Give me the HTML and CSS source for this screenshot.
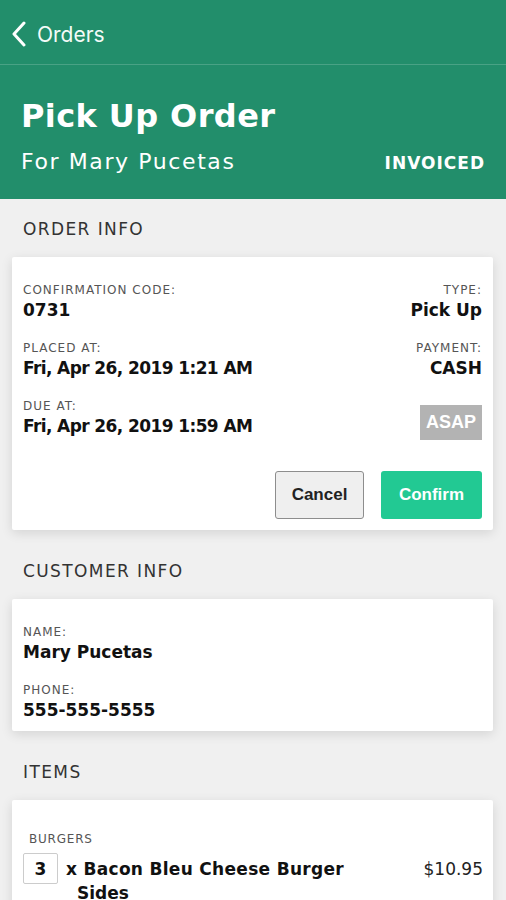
FILE: index.html
```html
<!DOCTYPE html>
<html>
<head>
<meta charset="utf-8">
<link rel="stylesheet" href="styles.css">
</head>
<body>
<header class="header">
  <div class="topbar">
    <svg class="chev" width="16" height="26" viewBox="0 0 16 26"><path d="M13 2 L3 13 L13 24" fill="none" stroke="#fff" stroke-width="3" stroke-linecap="round" stroke-linejoin="round"/></svg>
    <span class="back">Orders</span>
  </div>
  <div class="hero">
    <h1 class="title">Pick Up Order</h1>
    <div class="subrow">
      <span class="for">For Mary Pucetas</span>
      <span class="status">INVOICED</span>
    </div>
  </div>
</header>

<main class="content">
  <h2 class="section">ORDER INFO</h2>
  <section class="card order">
    <div class="grid">
      <div class="field"><div class="label">CONFIRMATION CODE:</div><div class="value">0731</div></div>
      <div class="field right"><div class="label">TYPE:</div><div class="value">Pick Up</div></div>
      <div class="field"><div class="label">PLACED AT:</div><div class="value date">Fri, Apr 26, 2019 1:21 AM</div></div>
      <div class="field right"><div class="label">PAYMENT:</div><div class="value">CASH</div></div>
      <div class="field"><div class="label">DUE AT:</div><div class="value date">Fri, Apr 26, 2019 1:59 AM</div></div>
      <div class="field right badgecell"><span class="badge">ASAP</span></div>
    </div>
    <div class="actions">
      <button class="btn cancel">Cancel</button>
      <button class="btn confirm">Confirm</button>
    </div>
  </section>

  <h2 class="section">CUSTOMER INFO</h2>
  <section class="card customer">
    <div class="field"><div class="label">NAME:</div><div class="value">Mary Pucetas</div></div>
    <div class="field"><div class="label">PHONE:</div><div class="value">555-555-5555</div></div>
  </section>

  <h2 class="section">ITEMS</h2>
  <section class="card items">
    <div class="cat">BURGERS</div>
    <div class="item">
      <span class="qty">3</span>
      <span class="name">x Bacon Bleu Cheese Burger</span>
      <span class="price">$10.95</span>
    </div>
    <div class="sub">Sides</div>
  </section>
</main>
</body>
</html>
```
FILE: styles.css
```css
* { box-sizing: border-box; }
body {
  margin: 0;
  background: #f0f0f0;
  font-family: "DejaVu Sans", "Open Sans", sans-serif;
  color: #111;
  overflow: hidden;
}
.header {
  background: #228e6b;
  color: #fff;
}
.topbar {
  height: 65px;
  display: flex;
  align-items: center;
  padding: 5px 0 0 11px;
  gap: 10px;
  border-bottom: 1px solid rgba(255,255,255,0.18);
}
.chev { display: block; margin-top: -2px; }
.back {
  font-family: "Inter", "Roboto", sans-serif;
  font-size: 21px;
  font-weight: 400;
  color: #f4fbf8;
}
.hero {
  padding: 29px 21px 0 21px;
  height: 134px;
}
.title {
  margin: 0;
  font-size: 32px;
  font-weight: 700;
  line-height: 44px;
  letter-spacing: 0.4px;
}
.subrow {
  display: flex;
  justify-content: space-between;
  align-items: baseline;
  margin-top: 9px;
}
.for { font-size: 22px; line-height: 30px; letter-spacing: 1.6px; }
.status { font-size: 17px; font-weight: 700; letter-spacing: 1px; margin-right: 0; }

.content { padding: 0 13px 0 12px; }
.section {
  margin: 0;
  padding: 18px 11px 0;
  height: 58px;
  font-size: 17px;
  font-weight: 400;
  color: #333;
  letter-spacing: 1.4px;
  line-height: 24px;
}
.card {
  background: #fff;
  border-radius: 2px;
  box-shadow: 0 3px 12px rgba(0,0,0,0.12);
  margin-bottom: 11px;
}
.order { padding: 26px 11px 11px; }
.grid {
  display: grid;
  grid-template-columns: 1fr auto;
  row-gap: 20px;
}
.field .label {
  font-size: 12px;
  color: #555;
  letter-spacing: 1px;
  line-height: 14px;
}
.field .value {
  font-size: 17px;
  font-weight: 700;
  line-height: 22px;
  margin-top: 2px;
}
.field .value.date { letter-spacing: -0.6px; }
.right { text-align: right; }
.badgecell { display: flex; justify-content: flex-end; align-items: flex-start; }
.badge {
  margin-top: 6px;
  background: #b3b3b3;
  color: #fff;
  font-weight: 700;
  font-size: 18px;
  padding: 0 6px;
  height: 35px;
  line-height: 35px;
  font-family: "Liberation Sans", sans-serif;
}
.actions {
  display: flex;
  justify-content: flex-end;
  gap: 17px;
  margin-top: 31px;
}
.btn {
  font-family: "Liberation Sans", sans-serif;
  font-weight: 700;
  font-size: 17px;
  height: 48px;
  border-radius: 3px;
}
.cancel {
  width: 89px;
  background: #efefef;
  border: 1px solid #8d8d8d;
  color: #222;
}
.confirm {
  width: 101px;
  background: #22c993;
  border: 0;
  color: #fff;
}
.customer { padding: 26px 11px 10px; height: 132px; }
.customer .field + .field { margin-top: 20px; }
.items { padding: 31px 10px 0 11px; height: 110px; }
.cat {
  font-size: 12px;
  color: #555;
  letter-spacing: 0.8px;
  padding-left: 6px;
  line-height: 16px;
}
.item {
  display: flex;
  align-items: center;
  margin-top: 6px;
}
.qty {
  width: 35px;
  height: 31px;
  border: 1px solid #ccc;
  border-radius: 2px;
  display: flex;
  align-items: center;
  justify-content: center;
  font-weight: 700;
  font-size: 17px;
}
.name {
  margin-left: 8px;
  font-size: 17px;
  font-weight: 700;
  flex: 1;
  letter-spacing: 0.3px;
}
.price { font-size: 17px; color: #222; }
.sub {
  font-size: 17px;
  font-weight: 700;
  padding-left: 54px;
  line-height: 20px;
  margin-top: -1px;
}
```
